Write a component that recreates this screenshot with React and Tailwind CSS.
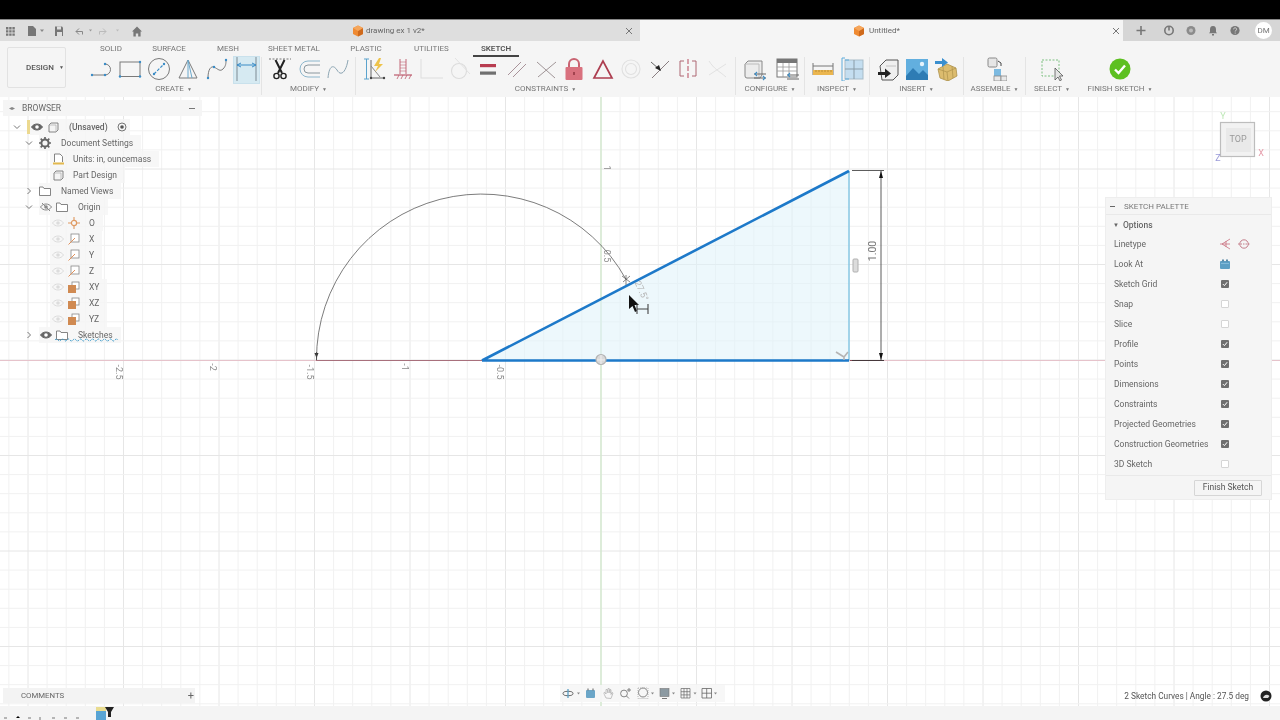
import { useMemo } from 'react';

const FONT = 'font-["Roboto",sans-serif]';
const BLUE = '#3a8cc6';
const GRAY = '#7a7a7a';
const RED = '#bd5a6c';

const Svg = ({ children, size = 24, className = '' }) => (
  <svg width={size} height={size} viewBox={`0 0 ${size} ${size}`} fill="none" className={`shrink-0 ${className}`}>
    {children}
  </svg>
);

const Dot = ({ x, y, r = 1.2, c = BLUE }) => <circle cx={x} cy={y} r={r} fill={c} />;

// ribbon icons, one 24x24 drawing each
const ICONS = {
  line: (
    <>
      <path d="M3 18H16A5.5 5.5 0 0 0 16 7" stroke={GRAY} strokeWidth="1" />
      <Dot x={3} y={18} /><Dot x={16} y={18} /><Dot x={16} y={7} />
    </>
  ),
  rect: (
    <>
      <rect x="2" y="5" width="20" height="14.5" stroke={GRAY} strokeWidth="1" />
      <Dot x={22} y={5} /><Dot x={22} y={19.5} /><Dot x={2} y={19.5} />
    </>
  ),
  circle: (
    <>
      <circle cx="12" cy="12" r="10.5" stroke={GRAY} strokeWidth="1" />
      <path d="M7 17L17 7" stroke={BLUE} strokeWidth="1.2" strokeDasharray="3 1.5" />
      <Dot x={7} y={17} /><Dot x={17} y={7} />
    </>
  ),
  triangle: (
    <>
      <path d="M12 3L3 21H21Z" stroke={GRAY} strokeWidth="1" />
      <path d="M12 3V21M12 3L16 21" stroke="#6aa8cc" strokeWidth="1" />
    </>
  ),
  spline: (
    <>
      <path d="M3 21C3 12 6 9 9 10C13 12 15 15 18 12C21 9 21 6 21 3" stroke={GRAY} strokeWidth="1" />
      <Dot x={3} y={21} /><Dot x={9} y={10} /><Dot x={21} y={3} />
    </>
  ),
  dimension: (
    <>
      <path d="M3 0V24M22 0V24" stroke="#7d8a93" strokeWidth="1" />
      <path d="M3 8H22M3 8L7 6M3 8L7 10M22 8L18 6M22 8L18 10" stroke={BLUE} strokeWidth="1" />
    </>
  ),
  scissors: (
    <>
      <path d="M1 2H23" stroke="#777" strokeWidth="1" strokeDasharray="2 1.5" />
      <path d="M7.5 3L14 16M16.5 3L10 16" stroke="#222" strokeWidth="2" />
      <circle cx="8.5" cy="19" r="2.6" stroke="#222" strokeWidth="1.4" />
      <circle cx="15.5" cy="19" r="2.6" stroke="#222" strokeWidth="1.4" />
    </>
  ),
  offset: (
    <>
      <path d="M23 4H11A8 8 0 0 0 11 20H23" stroke="#8cb6cc" strokeWidth="1" />
      <path d="M23 8H11A4 4 0 0 0 11 16H23" stroke="#8a979e" strokeWidth="1" />
    </>
  ),
  curve: <path d="M2 21C3 9 7 7 11 13C15 20 20 15 22 3" stroke="#8ca5b3" strokeWidth="1" />,
  autoDim: (
    <>
      <path d="M2 2H7M2 22H7M4.5 2V22" stroke="#5ba3cd" strokeWidth="1" />
      <path d="M9 3V21H22" stroke="#666" strokeWidth="1" />
      <path d="M9 9L18 20" stroke="#888" strokeWidth="1" />
      <path d="M17 1L12 9H16L13 15L21 7H17L19 1Z" fill="#eec34a" />
      <Dot x={9} y={21} c="#444" /><Dot x={22} y={21} c="#444" />
    </>
  ),
  fix: (
    <>
      <path d="M9 2V17M15 2V17" stroke={RED} strokeWidth=".9" />
      <path d="M9 5H15M9 8H15M9 11H15M9 14H15" stroke={RED} strokeWidth=".9" opacity=".6" />
      <path d="M3 18H21" stroke={RED} strokeWidth="1.2" />
      <path d="M6 22L8 18M10 22L12 18M14 22L16 18M18 22L20 18" stroke={RED} strokeWidth=".8" />
    </>
  ),
  coincident: <path d="M2 2V21H24" stroke="#dedede" strokeWidth="1.1" />,
  tangent: (
    <>
      <circle cx="11" cy="14" r="7.5" stroke="#dcdcdc" strokeWidth="1.1" />
      <path d="M7 1L22 17" stroke="#e2e2e2" strokeWidth="1" />
    </>
  ),
  equal: (
    <>
      <rect x="4" y="7" width="16" height="3.2" fill="#b83c50" />
      <rect x="4" y="14.5" width="16" height="3.2" fill="#707070" />
    </>
  ),
  parallel: <path d="M3 18L16 5M8 20L21 7" stroke="#a08890" strokeWidth=".9" />,
  perpendicular: <path d="M3 5L21 21M22 5L4 20" stroke="#968a8c" strokeWidth=".9" />,
  lock: (
    <>
      <path d="M7 10V7A5 5 0 0 1 17 7V10" stroke="#c96472" strokeWidth="2" />
      <rect x="3.5" y="10" width="17" height="13" rx="1" fill="#d9717e" />
      <rect x="11" y="15" width="2" height="3" fill="#a2434f" />
    </>
  ),
  delta: <path d="M12 4L3 21H21Z" stroke="#ad3e50" strokeWidth="1.7" />,
  concentric: (
    <>
      <circle cx="12" cy="12" r="9" stroke="#e0e0e0" strokeWidth="1.1" />
      <circle cx="12" cy="12" r="5.5" stroke="#e0e0e0" strokeWidth="1.1" />
    </>
  ),
  midpoint: (
    <>
      <path d="M21 4L4 21" stroke="#7d7074" strokeWidth=".9" />
      <path d="M3 5L11 12" stroke="#555" strokeWidth=".9" />
      <path d="M13 14L7 11L11 8Z" fill="#222" />
    </>
  ),
  symmetry: (
    <>
      <path d="M12 2V22" stroke={RED} strokeWidth="1.1" strokeDasharray="5 2" />
      <path d="M8 4H4V19H8M16 4H20V19H16" stroke="#ad6673" strokeWidth="1" />
    </>
  ),
  curvature: <path d="M4 4C9 12 14 14 21 20M21 7L4 18" stroke="#e2e2e2" strokeWidth="1" />,
  params: (
    <>
      <path d="M3 7L6 4H20V18L18 21H5A2 2 0 0 1 3 19Z" fill="#ececec" stroke="#888" strokeWidth="1" />
      <path d="M3 7H17V21" stroke="#bcbcbc" strokeWidth="1" />
      <path d="M12 17H24M12 21H24" stroke="#666" strokeWidth="1.2" />
      <path d="M15 15L13 17L15 19M21 19L23 21L21 23" stroke={BLUE} strokeWidth="1.1" />
    </>
  ),
  table: (
    <>
      <rect x="2" y="2" width="20" height="18" fill="#fff" stroke="#777" strokeWidth="1" />
      <rect x="2" y="2" width="20" height="4" fill="#777" />
      <path d="M2 10H22M2 14H22M8 6V20M14 6V20" stroke="#999" strokeWidth=".8" />
      <path d="M12 18H24M12 22H24" stroke="#666" strokeWidth="1.2" />
      <path d="M15 16L13 18L15 20" stroke={BLUE} strokeWidth="1.1" />
    </>
  ),
  ruler: (
    <>
      <path d="M2 6V18M22 6V18M2 9H22" stroke="#777" strokeWidth="1" />
      <rect x="2" y="13" width="20" height="5" fill="#ebb64f" />
      <path d="M5 13V15M8 13V15M11 13V15M14 13V15M17 13V15M20 13V15" stroke="#a67c2a" strokeWidth=".7" />
    </>
  ),
  section: (
    <>
      <rect x="5" y="3" width="18" height="19" fill="#c4def0" stroke="#a9bdc9" strokeWidth="1" />
      <path d="M14 3V22M5 12H23" stroke="#8a9ca7" strokeWidth="1" />
      <path d="M5 1H2V24H5" stroke="#5dabdb" strokeWidth="1" />
      <path d="M5 3H9M5 22H9" stroke="#5dabdb" strokeWidth="1" />
    </>
  ),
  derive: (
    <>
      <path d="M4 9L10 3H22V18L17 23H6Z" fill="#efefef" stroke="#555" strokeWidth="1" />
      <path d="M10 9H20" stroke="#c2c2c2" strokeWidth="1" />
      <path d="M2 15H9V11.5L15 16.5L9 21V18H2Z" fill="#222" />
    </>
  ),
  image: (
    <>
      <rect x="1" y="2" width="22" height="21" fill="#62afdf" />
      <path d="M1 19L8 11L14 17L18 13L23 18V23H1Z" fill="#2e7cb4" />
      <circle cx="17" cy="7" r="2.2" fill="#e7f4fc" />
    </>
  ),
  mesh: (
    <>
      <path d="M4 12L13 7L22 11L23 19L14 24L6 21Z" fill="#dcbc6e" stroke="#ad924c" strokeWidth=".8" />
      <path d="M4 12L13 15L22 11M13 15L14 24M9 10L10 22M18 9L19 21" stroke="#ad924c" strokeWidth=".7" />
      <path d="M1 4H8V1L14 5.5L8 10V7H1Z" fill="#3a8fcf" />
    </>
  ),
  assemble: (
    <>
      <rect x="5" y="1" width="9" height="9" rx="1.5" fill="#e6e6e6" stroke="#888" strokeWidth="1" />
      <path d="M15 4L18 6V9" stroke="#444" strokeWidth="1" />
      <rect x="11" y="12" width="7" height="7" fill="#7cbae1" />
      <rect x="11" y="19" width="7" height="5" fill="#e8e8e8" stroke="#888" strokeWidth=".8" />
      <rect x="18" y="19" width="6" height="5" fill="#e8e8e8" stroke="#888" strokeWidth=".8" />
    </>
  ),
  select: (
    <>
      <rect x="2" y="3" width="17" height="16" stroke="#7cc080" strokeWidth="1" strokeDasharray="2 1.5" />
      <path d="M15 11L15 23L18 20L20 24L21.5 23L19.5 19L23 19Z" fill="#e4e4e4" stroke="#444" strokeWidth=".7" />
    </>
  ),
  finish: (
    <>
      <circle cx="12" cy="12" r="10.5" fill="#5dc021" />
      <path d="M7 12.5L10.5 16L17 8.5" stroke="#fff" strokeWidth="2.4" />
    </>
  ),
};

const GROUPS = [
  { label: 'CREATE', w: 'w-[176px]', cell: 'w-[29px]', icons: ['line', 'rect', 'circle', 'triangle', 'spline', 'dimension'] },
  { label: 'MODIFY', w: 'w-[94px]', cell: 'w-[29px]', icons: ['scissors', 'offset', 'curve'] },
  {
    label: 'CONSTRAINTS',
    w: 'w-[380px]',
    cell: 'w-[28.6px]',
    icons: ['autoDim', 'fix', 'coincident', 'tangent', 'equal', 'parallel', 'perpendicular', 'lock', 'delta', 'concentric', 'midpoint', 'symmetry', 'curvature'],
  },
  { label: 'CONFIGURE', w: 'w-[69px]', cell: 'w-[33px]', icons: ['params', 'table'] },
  { label: 'INSPECT', w: 'w-[65px]', cell: 'w-[29px]', icons: ['ruler', 'section'] },
  { label: 'INSERT', w: 'w-[94px]', cell: 'w-[29px]', icons: ['derive', 'image', 'mesh'] },
  { label: 'ASSEMBLE', w: 'w-[62px]', cell: 'w-[29px]', icons: ['assemble'] },
  { label: 'SELECT', w: 'w-[52px]', cell: 'w-[29px]', icons: ['select'], plain: true },
  { label: 'FINISH SKETCH', w: 'w-[84px]', cell: 'w-[29px]', icons: ['finish'], plain: true },
];

const TABS = [
  { label: 'SOLID', w: 'w-[58px]' },
  { label: 'SURFACE', w: 'w-[58px]' },
  { label: 'MESH', w: 'w-[60px]' },
  { label: 'SHEET METAL', w: 'w-[72px]' },
  { label: 'PLASTIC', w: 'w-[72px]' },
  { label: 'UTILITIES', w: 'w-[59px]' },
  { label: 'SKETCH', w: 'w-[70px]', active: true },
];

const Caret = () => <span className="ml-[3px] text-[5px] leading-none">▼</span>;

const FusionCube = ({ size = 12 }) => (
  <svg width={size} height={size} viewBox="0 0 12 12" className="shrink-0">
    <path d="M6 .5L11 3V9L6 11.5L1 9V3Z" fill="#ef8a32" />
    <path d="M6 6L11 3V9L6 11.5Z" fill="#cf6a1c" />
    <path d="M6 .5L11 3L6 6L1 3Z" fill="#f5a65c" />
  </svg>
);

const Close = () => (
  <svg width="8" height="8" viewBox="0 0 8 8" className="shrink-0">
    <path d="M1 1L7 7M7 1L1 7" stroke="#777" strokeWidth="1" />
  </svg>
);

function TabBar() {
  return (
    <div className={`flex h-[21px] shrink-0 text-[8px] text-[#666] ${FONT}`}>
      <div className="relative flex w-[640px] items-center bg-[#dedede]">
        <svg width="150" height="21" viewBox="0 0 150 21" className="ml-[6px] shrink-0">
          <path d="M0 7h2.4v2.4H0zM3.2 7h2.4v2.4H3.2zM6.4 7h2.4v2.4H6.4zM0 10.2h2.4v2.4H0zM3.2 10.2h2.4v2.4H3.2zM6.4 10.2h2.4v2.4H6.4zM0 13.4h2.4v2.4H0zM3.2 13.4h2.4v2.4H3.2zM6.4 13.4h2.4v2.4H6.4z" fill="#777" />
          <path d="M22 6h5l3 3v7h-8z" fill="#777" />
          <path d="M34 9.5h4l-2 2.5z" fill="#888" />
          <path d="M49 6.5h7l1 1v8.5h-8z" fill="#777" />
          <path d="M51 6.5h4v3h-4zM51 12h5v4h-5z" fill="#dedede" />
          <path d="M70 11.5l3-3M70 11.5l3 3M70 11.5h6.5v3" stroke="#888" strokeWidth="1" fill="none" />
          <path d="M83 9.5h3l-1.5 2z" fill="#999" />
          <path d="M100 11.5l-3-3M100 11.5l-3 3M100 11.5h-6.5v3" stroke="#bbb" strokeWidth="1" fill="none" />
          <path d="M110 9.5h3l-1.5 2z" fill="#bbb" />
          <path d="M131 6.5l5 5h-1.4v5h-2.4v-3h-2.4v3h-2.4v-5h-1.4z" fill="#777" />
        </svg>
        <div className="ml-[196px] flex items-center gap-[2px]">
          <FusionCube />
          <span>drawing ex 1 v2*</span>
        </div>
        <div className="ml-auto mr-[7px]"><Close /></div>
      </div>
      <div className="flex w-[483px] items-center bg-[#f5f5f5]">
        <div className="ml-[213px] flex items-center gap-[4px]">
          <FusionCube />
          <span>Untitled*</span>
        </div>
        <div className="ml-auto mr-[3px]"><Close /></div>
      </div>
      <div className="flex flex-1 items-center bg-[#d6d6d6]">
        <svg width="115" height="21" viewBox="0 0 115 21" className="ml-[12px] shrink-0">
          <path d="M6 6v9M1.5 10.5h9" stroke="#777" strokeWidth="1.6" />
          <circle cx="34" cy="10.5" r="4.2" fill="none" stroke="#777" strokeWidth="1.6" />
          <path d="M34 6v4.5" stroke="#777" strokeWidth="1.6" />
          <circle cx="56" cy="10.5" r="4.5" fill="#8b8b8b" />
          <circle cx="56" cy="10.5" r="2" fill="#bbb" />
          <path d="M78 6c2.4 0 3 1.6 3 3.5v2.5l1 1.2h-8l1-1.2V9.5C75 7.6 75.6 6 78 6zM77 14h2v1.4h-2z" fill="#777" />
          <circle cx="100" cy="10.5" r="4.6" fill="#777" />
          <path d="M98.6 9.3c0-2 3-2 3 0c0 1.1-1.4 1-1.4 2.2M100.2 12.6v1" stroke="#dedede" strokeWidth=".9" fill="none" />
        </svg>
        <span className="ml-[5px] flex h-[17px] w-[17px] items-center justify-center rounded-full bg-white text-[8px] text-[#777]">DM</span>
      </div>
    </div>
  );
}

function Ribbon() {
  return (
    <div className={`flex h-[56px] shrink-0 bg-[#f5f5f5] text-[#777] ${FONT}`}>
      <div className="mb-[9px] ml-[7px] mt-[6px] flex w-[59px] items-center rounded-[2px] border border-[#e2e2e2] pl-[18px] text-[8px] font-medium text-[#555]">
        DESIGN<span className="ml-[5px] text-[5px] leading-none">▼</span>
      </div>
      <div className="ml-[20px] flex flex-col">
        <div className="-ml-[4px] flex h-[16px] text-[8px]">
          {TABS.map((t) => (
            <div key={t.label} className={`flex ${t.w} justify-center`}>
              <span className={t.active ? 'flex h-[16px] items-center border-b-2 border-[#444] px-[8px] pt-[2px] font-semibold text-[#555]' : 'flex h-[16px] items-center'}>
                {t.label}
              </span>
            </div>
          ))}
        </div>
        <div className="flex">
          {GROUPS.map((g) => (
            <div key={g.label} className={`flex ${g.w} flex-col items-center ${g.plain ? '' : 'border-r border-[#e4e4e4]'}`}>
              <div className="flex h-[24px] items-center justify-center">
                {g.icons.map((name) => (
                  <div
                    key={name}
                    className={`relative flex h-[24px] ${g.cell} items-center justify-center`}
                  >
                    {name === 'dimension' && (
                      <div className="absolute inset-x-[1px] -bottom-[3px] -top-[1px] border border-[#c9e1ec] bg-[#d6eaf2]" />
                    )}
                    <Svg className="relative">{ICONS[name]}</Svg>
                  </div>
                ))}
              </div>
              <div className="flex h-[14px] items-center whitespace-nowrap pt-[2px] text-[8px]">
                {g.label}<Caret />
              </div>
            </div>
          ))}
        </div>
      </div>
    </div>
  );
}

const AxisLabel = ({ x, y, children }) => (
  <text x={x} y={y} transform={`rotate(90 ${x} ${y})`} fontSize="9" fill="#8a8a8a" textAnchor="middle" dominantBaseline="middle">
    {children}
  </text>
);

function SketchCanvas() {
  const lines = useMemo(() => {
    const out = [];
    for (let k = -32; k <= 36; k++) {
      out.push({ x: 601 + k * 19.1, major: k % 5 === 0 });
    }
    return out;
  }, []);
  const rows = useMemo(() => {
    const out = [];
    for (let k = -14; k <= 18; k++) {
      out.push({ y: 360 + k * 19.1, major: k % 5 === 0 });
    }
    return out;
  }, []);

  return (
    <svg viewBox="0 97 1280 609" className={`absolute inset-0 h-full w-full ${FONT}`}>
      {lines.map((l) => (
        <path key={l.x} d={`M${l.x} 97V706`} stroke={l.major ? '#e6e6e6' : '#f1f1f1'} strokeWidth="1" />
      ))}
      {rows.map((r) => (
        <path key={r.y} d={`M0 ${r.y}H1280`} stroke={r.major ? '#e6e6e6' : '#f1f1f1'} strokeWidth="1" />
      ))}
      <path d="M601 97V706" stroke="#cfe8c9" strokeWidth="1.2" />
      <path d="M0 360.5H1280" stroke="#e6c3cb" strokeWidth="1" />
      <path d="M316 360.5H482" stroke="#a8707c" strokeWidth="1" />
      <path d="M850 360.5H884" stroke="#8f4b58" strokeWidth="1" />

      <path d="M482 360.5L849 171V360.5Z" fill="#dff3fa" fillOpacity=".55" />
      <path d="M316.5 360A165 165 0 0 1 626 279.4" stroke="#5a5a5a" strokeWidth=".8" fill="none" />
      <path d="M849 171V360.5" stroke="#6fbce0" strokeWidth="1.2" />
      <path d="M482 360.5H849M482 360.5L849 171" stroke="#1d79c9" strokeWidth="2.6" />

      {/* dimension */}
      <path d="M852 170.5H884M852 360.5H884" stroke="#333" strokeWidth=".8" />
      <path d="M881 171V360" stroke="#333" strokeWidth=".8" />
      <path d="M881 171L879 178H883ZM881 360L879 353H883Z" fill="#111" />
      <text x="873" y="251" transform="rotate(-90 873 251)" fontSize="10.5" fill="#777" textAnchor="middle" dominantBaseline="middle">1.00</text>

      {/* markers */}
      <rect x="853" y="259" width="5" height="13" rx="1" fill="#dcdcdc" stroke="#b0b0b0" strokeWidth="1" />
      <path d="M836 352L844 357M844 357L848 352M844 357V360" stroke="#b4b4b4" strokeWidth="1.6" fill="none" />
      <circle cx="601" cy="359.5" r="5" fill="#d9d9d9" stroke="#b3b3b3" strokeWidth="1.2" />
      <path d="M601 355V364M597 360H605" stroke="#eee" strokeWidth="1" />
      <path d="M316.5 358L314.5 353H318.5Z" fill="#333" />
      <path d="M316.5 352V360" stroke="#444" strokeWidth=".8" />
      <path d="M622 276L630 282M630 276L623 282" stroke="#555" strokeWidth=".7" />
      <path d="M626 275V285" stroke="#555" strokeWidth=".7" />

      {/* axis numbers */}
      <AxisLabel x={606} y={168}>1</AxisLabel>
      <AxisLabel x={606.5} y={256}>0.5</AxisLabel>
      <AxisLabel x={499} y={372}>-0.5</AxisLabel>
      <AxisLabel x={404.5} y={367}>-1</AxisLabel>
      <AxisLabel x={309} y={372}>-1.5</AxisLabel>
      <AxisLabel x={212.5} y={367}>-2</AxisLabel>
      <AxisLabel x={118} y={372}>-2.5</AxisLabel>
      <text x="641" y="291" transform="rotate(66 641 291)" fontSize="9" fill="#b5b5b5" textAnchor="middle" dominantBaseline="middle">27.5°</text>

      {/* cursor */}
      <path d="M629 295V309L632.5 306L635 312L637 311L634.5 305L639 305Z" fill="#111" />
      <path d="M637 304V314M648 304V314M637 309H648" stroke="#444" strokeWidth="1.1" />

      {/* view cube */}
      <rect x="1220.5" y="122.5" width="34" height="34" fill="#f2f2f2" stroke="#bdbdbd" strokeWidth="1.2" />
      <rect x="1226" y="128" width="25" height="24" fill="#e9e9e9" />
      <text x="1238" y="140" fontSize="9" fill="#9a9a9a" textAnchor="middle" dominantBaseline="middle">TOP</text>
      <text x="1223" y="117" fontSize="9" fill="#bfe8b8" textAnchor="middle" dominantBaseline="middle">Y</text>
      <text x="1261" y="154" fontSize="9" fill="#e59aa8" textAnchor="middle" dominantBaseline="middle">X</text>
      <text x="1218" y="159" fontSize="9" fill="#9a9ad8" textAnchor="middle" dominantBaseline="middle">Z</text>
    </svg>
  );
}

const Chevron = ({ open }) => (
  <svg width="8" height="8" viewBox="0 0 8 8" className="shrink-0">
    <path d={open ? 'M1 2.5L4 5.5L7 2.5' : 'M2.5 1L5.5 4L2.5 7'} stroke="#777" strokeWidth="1" fill="none" />
  </svg>
);

const Eye = ({ faint, off }) => (
  <svg width="12" height="10" viewBox="0 0 12 10" className="shrink-0">
    <path d="M.5 5C3 1 9 1 11.5 5C9 9 3 9 .5 5Z" fill={faint || off ? 'none' : '#666'} stroke={faint ? '#dcdcdc' : off ? '#888' : '#666'} strokeWidth="1" />
    <circle cx="6" cy="5" r="1.8" fill={faint ? '#dcdcdc' : off ? '#888' : '#fff'} />
    {off && <path d="M2 1L10 9" stroke="#888" strokeWidth="1" />}
  </svg>
);

const Folder = () => (
  <svg width="12" height="10" viewBox="0 0 12 10" className="shrink-0">
    <path d="M.5 1H4L5 2.5H11.5V9.5H.5Z" fill="#fff" stroke="#777" strokeWidth=".9" />
  </svg>
);

const Body = () => (
  <svg width="11" height="11" viewBox="0 0 11 11" className="shrink-0">
    <path d="M1 3L3 1H10V8L8 10H1Z" fill="#f4f4f4" stroke="#777" strokeWidth=".9" />
    <path d="M1 3H8V10" stroke="#aaa" strokeWidth=".7" fill="none" />
  </svg>
);

const Gear = () => (
  <svg width="12" height="12" viewBox="0 0 12 12" className="shrink-0">
    <circle cx="6" cy="6" r="3.6" fill="none" stroke="#666" strokeWidth="2" />
    <path d="M6 0V2.2M6 9.8V12M0 6H2.2M9.8 6H12M1.7 1.7L3.3 3.3M8.7 8.7L10.3 10.3M10.3 1.7L8.7 3.3M3.3 8.7L1.7 10.3" stroke="#666" strokeWidth="1.7" />
  </svg>
);

const Units = () => (
  <svg width="11" height="12" viewBox="0 0 11 12" className="shrink-0">
    <path d="M1.5 9V1H7L9.5 3.5V9" fill="#fff" stroke="#777" strokeWidth=".9" />
    <rect x="0" y="9.5" width="11" height="2" fill="#e3b94e" />
  </svg>
);

const OriginPoint = () => (
  <svg width="12" height="12" viewBox="0 0 12 12" className="shrink-0">
    <circle cx="6" cy="6" r="2.6" fill="none" stroke="#df9a62" strokeWidth="1.2" />
    <path d="M6 0V3.4M6 8.6V12M0 6H3.4M8.6 6H12" stroke="#df9a62" strokeWidth="1.1" />
  </svg>
);

const OriginAxis = () => (
  <svg width="12" height="12" viewBox="0 0 12 12" className="shrink-0">
    <rect x="3" y="1" width="8" height="8" fill="#fff" stroke="#888" strokeWidth=".8" />
    <path d="M.5 11.5L7 5" stroke="#e0905a" strokeWidth="1" />
  </svg>
);

const OriginPlane = () => (
  <svg width="12" height="12" viewBox="0 0 12 12" className="shrink-0">
    <rect x="4" y="1" width="7" height="7" fill="#fff" stroke="#888" strokeWidth=".8" />
    <rect x="0" y="4" width="8" height="8" fill="#d08a52" />
  </svg>
);

// chevron sits outside the row's light box, as in the tree
const TreeRow = ({ chevron, open, children }) => (
  <div className={`flex h-[16px] items-center ${chevron ? 'pl-[25px]' : 'pl-[50px]'}`}>
    {chevron && <Chevron open={open} />}
    <div className={`flex h-[16px] items-center bg-[#f5f5f5]/80 pr-[8px] ${chevron ? 'ml-[6px]' : ''}`}>{children}</div>
  </div>
);

const LEAVES = [
  { name: 'O', Icon: OriginPoint },
  { name: 'X', Icon: OriginAxis },
  { name: 'Y', Icon: OriginAxis },
  { name: 'Z', Icon: OriginAxis },
  { name: 'XY', Icon: OriginPlane },
  { name: 'XZ', Icon: OriginPlane },
  { name: 'YZ', Icon: OriginPlane },
];

function Browser() {
  return (
    <div className={`absolute left-[3px] top-[3px] w-[199px] text-[8.5px] text-[#666] ${FONT}`}>
      <div className="flex h-[16px] items-center bg-[#f5f5f5] pl-[6px] pr-[7px]">
        <span className="w-[13px] text-[6px] leading-none text-[#888]">◂▸</span>
        <span className="pt-[1px]">BROWSER</span>
        <span className="ml-auto h-[1px] w-[6px] bg-[#777]" />
      </div>
      <div className="-ml-[3px] mt-[3px] flex flex-col">
        <div className="flex h-[16px] items-center pl-[13px]">
          <Chevron open />
          <span className="ml-[6px] h-[14px] w-[3px] bg-[#ecd98f]" />
          <div className="flex h-[16px] items-center bg-[#f5f5f5]/80 pr-[3px]">
            <span className="ml-[1px]"><Eye /></span>
            <span className="ml-[5px]"><Body /></span>
            <span className="ml-[10px] w-[38px] whitespace-nowrap pt-[1px] font-medium">(Unsaved)</span>
            <svg width="10" height="10" viewBox="0 0 10 10" className="ml-[10px]">
              <circle cx="5" cy="5" r="4" fill="none" stroke="#666" strokeWidth=".9" />
              <circle cx="5" cy="5" r="1.8" fill="#555" />
            </svg>
          </div>
        </div>
        <TreeRow chevron open>
          <Gear />
          <span className="ml-[10px] pt-[1px]">Document Settings</span>
        </TreeRow>
        <TreeRow>
          <span className="ml-[3px]"><Units /></span>
          <span className="ml-[9px] pt-[1px]">Units: in, ouncemass</span>
        </TreeRow>
        <TreeRow>
          <span className="ml-[3px]"><Body /></span>
          <span className="ml-[9px] pt-[1px]">Part Design</span>
        </TreeRow>
        <TreeRow chevron>
          <Folder />
          <span className="ml-[10px] pt-[1px]">Named Views</span>
        </TreeRow>
        <TreeRow chevron open>
          <span className="ml-[1px]"><Eye off /></span>
          <span className="ml-[4px]"><Folder /></span>
          <span className="ml-[10px] pt-[1px]">Origin</span>
        </TreeRow>
        {LEAVES.map(({ name, Icon }) => (
          <TreeRow key={name}>
            <span className="ml-[2px]"><Eye faint /></span>
            <span className="ml-[4px]"><Icon /></span>
            <span className="ml-[9px] pt-[1px]">{name}</span>
          </TreeRow>
        ))}
        <div className="relative">
          <TreeRow chevron>
            <span className="ml-[1px]"><Eye /></span>
            <span className="ml-[4px]"><Folder /></span>
            <span className="ml-[10px] pt-[1px]">Sketches</span>
          </TreeRow>
          <svg width="66" height="4" viewBox="0 0 66 4" className="absolute left-[55px] top-[11px]">
            <path d="M0 2q1.5-2 3 0t3 0t3 0t3 0t3 0t3 0t3 0t3 0t3 0t3 0t3 0t3 0t3 0t3 0t3 0t3 0t3 0t3 0t3 0t3 0t3 0" stroke="#3c9ac9" strokeWidth="1" strokeDasharray="2 1" fill="none" />
          </svg>
        </div>
      </div>
    </div>
  );
}

const Check = ({ on }) =>
  on ? (
    <span className="flex h-[8px] w-[8px] items-center justify-center rounded-[1px] bg-[#6f6f6f]">
      <svg width="6" height="6" viewBox="0 0 6 6">
        <path d="M.8 3L2.4 4.6L5.2 1.2" stroke="#fff" strokeWidth="1" fill="none" />
      </svg>
    </span>
  ) : (
    <span className="h-[8px] w-[8px] rounded-[1px] border border-[#d5d5d5] bg-white" />
  );

const PALETTE = [
  ['Sketch Grid', true],
  ['Snap', false],
  ['Slice', false],
  ['Profile', true],
  ['Points', true],
  ['Dimensions', true],
  ['Constraints', true],
  ['Projected Geometries', true],
  ['Construction Geometries', true],
  ['3D Sketch', false],
];

const PaletteRow = ({ label, children }) => (
  <div className="flex h-[20px] items-center pl-[8px]">
    <span className="w-[107px] whitespace-nowrap pt-[1px]">{label}</span>
    {children}
  </div>
);

function SketchPalette() {
  return (
    <div className={`absolute right-[8px] top-[100px] w-[167px] border border-[#eeeeee] bg-[#f5f5f5] text-[8.5px] text-[#666] ${FONT}`}>
      <div className="flex h-[17px] items-center border-b border-[#e9e9e9] pl-[4px] text-[8px] text-[#777]">
        <span className="h-[1px] w-[5px] bg-[#666]" />
        <span className="ml-[9px] pt-[1px]">SKETCH PALETTE</span>
      </div>
      <div className="flex h-[19px] items-center pl-[7px] font-medium">
        <span className="mr-[4px] text-[6px] leading-none">▼</span>
        <span className="pt-[1px]">Options</span>
      </div>
      <PaletteRow label="Linetype">
        <svg width="30" height="12" viewBox="0 0 30 12" className="-ml-[1px]">
          <path d="M10 1L2 6L10 11M0 6H10M6 3V9" stroke="#c9707f" strokeWidth=".8" fill="none" />
          <circle cx="24" cy="6" r="4.2" stroke="#b8606e" strokeWidth=".8" fill="none" />
          <path d="M18 6H29.5" stroke="#b8606e" strokeWidth=".8" strokeDasharray="1.5 1" />
        </svg>
      </PaletteRow>
      <PaletteRow label="Look At">
        <svg width="10" height="10" viewBox="0 0 10 10" className="-ml-[1px]">
          <rect x="0" y="2" width="10" height="8" rx="1" fill="#5d9fc4" />
          <rect x="2" y="0.5" width="2" height="2" fill="#5d8aa6" />
          <rect x="6" y="0.5" width="2" height="2" fill="#5d8aa6" />
          <path d="M1 4.5H9" stroke="#8dc2de" strokeWidth=".8" />
        </svg>
      </PaletteRow>
      {PALETTE.map(([label, on]) => (
        <PaletteRow key={label} label={label}>
          <Check on={on} />
        </PaletteRow>
      ))}
      <div className="mt-[1px] flex h-[24px] items-center justify-end border-t border-[#e9e9e9] pr-[9px]">
        <button type="button" className="flex h-[16px] w-[68px] items-center justify-center rounded-[1px] border border-[#d6d6d6] bg-[#f5f5f5] text-[8.5px] text-[#555]">
          Finish Sketch
        </button>
      </div>
    </div>
  );
}

function NavBar() {
  return (
    <div className="absolute bottom-[4px] left-[560px] flex h-[17px] w-[165px] items-center bg-[#f6f6f6]/90">
      <svg width="165" height="17" viewBox="0 0 165 17">
        <ellipse cx="8" cy="8.5" rx="5" ry="2.2" fill="none" stroke="#555" strokeWidth=".9" />
        <path d="M8 4V13" stroke="#5d9fc4" strokeWidth="1.3" />
        <path d="M17 7.5h3l-1.5 2z" fill="#888" />
        <rect x="26" y="5" width="9" height="8" rx="1" fill="#6ba6c8" />
        <path d="M28 3.5v2M33 3.5v2" stroke="#777" strokeWidth="1.2" />
        <path d="M46 13C44 9 43 7 45 7.5L46 9V4.5L47.2 4.5L48 8V3.5L49.2 3.5L50 8V4.5L51 4.8V9.5L52 7.5L53 8L51 13.5Z" fill="none" stroke="#aaa" strokeWidth=".7" />
        <circle cx="64" cy="8.5" r="3.4" fill="none" stroke="#777" strokeWidth=".9" />
        <path d="M66.5 11L69 13.5M69 3V7M67 5H71" stroke="#777" strokeWidth=".9" />
        <circle cx="83" cy="7.5" r="4.5" fill="none" stroke="#777" strokeWidth=".9" />
        <rect x="78" y="3" width="10" height="10.5" fill="none" stroke="#aaa" strokeWidth=".8" strokeDasharray="1 1" />
        <path d="M91 7.5h3l-1.5 2z" fill="#888" />
        <rect x="100" y="3.5" width="9" height="8" fill="#8c9aa2" stroke="#777" strokeWidth=".6" />
        <path d="M102 13.5H107" stroke="#777" strokeWidth="1" />
        <path d="M112 7.5h3l-1.5 2z" fill="#888" />
        <path d="M121 3.5h9v9.5h-9zM124 3.5V13M127 3.5V13M121 6.7h9M121 9.9h9" fill="none" stroke="#666" strokeWidth=".7" />
        <path d="M133.5 7.5h3l-1.5 2z" fill="#888" />
        <path d="M142 3.5h9.5v9.5h-9.5zM146.7 3.5V13M142 8.2h9.5" fill="none" stroke="#666" strokeWidth=".8" />
        <path d="M154 7.5h3l-1.5 2z" fill="#888" />
      </svg>
    </div>
  );
}

export default function App() {
  return (
    <div className={`flex h-screen w-[1280px] flex-col overflow-hidden bg-white blur-[0.3px] ${FONT}`}>
      <div className="h-[20px] shrink-0 border-b border-[#888] bg-black" />
      <TabBar />
      <Ribbon />
      <div className="relative flex-1 overflow-hidden bg-white">
        <SketchCanvas />
        <Browser />
        <SketchPalette />
        <div className="absolute bottom-[3px] left-[3px] flex h-[15px] w-[192px] items-center justify-between bg-[#f3f3f3] pl-[18px] pr-[1px] text-[7.8px] text-[#666]">
          <span>COMMENTS</span>
          <span className="text-[11px] leading-none">+</span>
        </div>
        <NavBar />
        <div className="absolute bottom-[4px] right-[8px] flex items-center gap-[11px] text-[8.3px] text-[#555]">
          <span>2 Sketch Curves | Angle : 27.5 deg</span>
          <svg width="12" height="12" viewBox="0 0 12 12">
            <circle cx="6" cy="6" r="5.5" fill="#222" />
            <path d="M3 8C3.5 5 7 3.5 9.5 6L8 8Z" fill="#ddd" />
          </svg>
        </div>
      </div>
      <div className="relative h-[14px] shrink-0 bg-[#f4f4f4]">
        <svg width="120" height="14" viewBox="0 0 120 14" className="absolute left-0 top-0">
          <path d="M4 12h3M16 12l2-2l2 2M28 12h3M40 11v3M52 12h3M64 12h3M76 12h3" stroke="#777" strokeWidth="1" />
          <rect x="96" y="5" width="10" height="9" fill="#58a4d4" />
          <rect x="96" y="1" width="10" height="4" fill="#e9dc90" />
          <path d="M105 1h9l-3 5v5h-3V6Z" fill="#222" />
        </svg>
      </div>
    </div>
  );
}
